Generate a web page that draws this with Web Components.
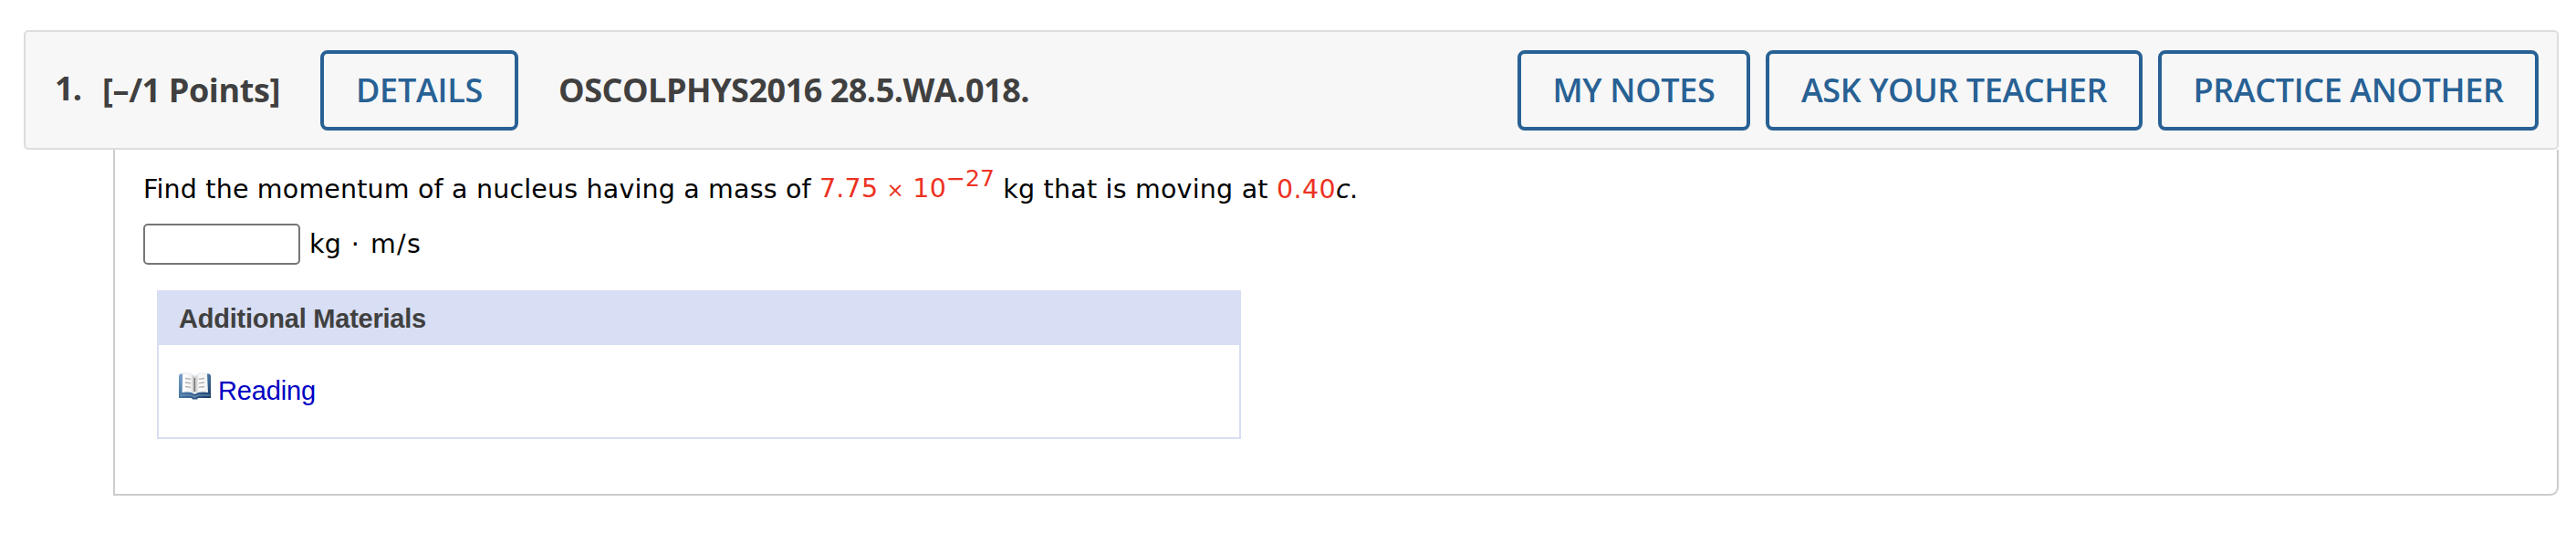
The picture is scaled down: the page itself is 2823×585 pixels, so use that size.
<!DOCTYPE html>
<html lang="en">
<head>
<meta charset="utf-8">
<title>Question 1</title>
<style>
body { margin: 0; background: #fff; font-family: "Open Sans", sans-serif; }
</style>
</head>
<body>
<question-page></question-page>
<script>
const define = (name, html, setup) => {
  const template = document.createElement('template');
  template.innerHTML = html;
  customElements.define(name, class extends HTMLElement {
    constructor() {
      super();
      this.attachShadow({ mode: 'open' }).append(template.content.cloneNode(true));
    }
    connectedCallback() { if (setup) setup(this); }
  });
};

/* A run of text whose tracking is adjusted so that it fills a given width. */
define('text-run', `
<style>
  :host { display: block; flex: none; }
  span { display: block; width: max-content; white-space: pre; }
</style><span><slot></slot></span>`, host => {
  const target = Number(host.getAttribute('width'));
  const span = host.shadowRoot.querySelector('span');
  const count = host.textContent.length;
  const natural = span.getBoundingClientRect().width;
  span.style.letterSpacing = (target - natural) / count + 'px';
  host.style.width = target + 'px';
});

define('outline-button', `
<style>
  :host { display: block; flex: none; }
  button { box-sizing: border-box; width: 100%; height: 88px; margin: 0; padding: 0; display: flex;
    align-items: center; justify-content: center; border: 4px solid #286194; border-radius: 8px;
    background: transparent; color: #286194; font: 600 36px/48px "Open Sans", sans-serif; }
</style><button type="button"><slot></slot></button>`);

define('question-header', `
<style>
  :host { display: flex; align-items: center; box-sizing: border-box; height: 131px; margin-left: 26px; width: 2778px;
    padding: 0 20px 0 32px; border: 2px solid #ddd; border-radius: 5px; background: #f7f7f7;
    color: #404040; font: 700 36px/48px "Open Sans", sans-serif; }
  .number { width: 52px; padding-bottom: 4px; }
  .points { width: 239px; }
  .details { width: 217px; }
  .code { margin-left: 44px; flex: 1; }
  .actions { display: flex; gap: 17px; }
  .notes { width: 255px; } .ask { width: 413px; } .practice { width: 417px; }
</style>
<div class="number"><text-run width="29">1.</text-run></div>
<div class="points"><text-run width="195">[–/1 Points]</text-run></div>
<outline-button class="details"><text-run width="139">DETAILS</text-run></outline-button>
<div class="code"><text-run width="516">OSCOLPHYS2016 28.5.WA.018.</text-run></div>
<div class="actions">
  <outline-button class="notes"><text-run width="178">MY NOTES</text-run></outline-button>
  <outline-button class="ask"><text-run width="335">ASK YOUR TEACHER</text-run></outline-button>
  <outline-button class="practice"><text-run width="340">PRACTICE ANOTHER</text-run></outline-button>
</div>`);

define('book-icon', `
<style>:host { display: block; width: 35px; height: 32px; } svg { display: block; }</style>
<svg width="35" height="32" viewBox="0 0 35 32">
  <defs>
    <linearGradient id="cover" x1="0" y1="0" x2="1" y2="1"><stop offset="0" stop-color="#79a3cb"/><stop offset=".5" stop-color="#43719f"/><stop offset="1" stop-color="#17365f"/></linearGradient>
    <linearGradient id="page" x1="0" x2="1"><stop offset="0" stop-color="#fff"/><stop offset=".7" stop-color="#f4f4f4"/><stop offset="1" stop-color="#bcbcbc"/></linearGradient>
    <linearGradient id="page2" x1="0" x2="1"><stop offset="0" stop-color="#c8c8c8"/><stop offset=".35" stop-color="#fafafa"/><stop offset="1" stop-color="#f4f4f4"/></linearGradient>
  </defs>
  <path d="M0 5Q0 3 2 2.5H13L17.5 5L22 2.5H33Q35 3 35 5V29H21L20 30.5H15L14 29H0Z" fill="url(#cover)"/>
  <path d="M4 1.5Q13 .5 17.5 5Q22 .5 31 1.5L32 23Q22 21.5 17.5 25Q13 21.5 3.5 23Z" fill="#e8edf2"/>
  <path d="M5 2.5Q13 2 17 5.5V23Q13 20.5 4.5 21.5Z" fill="url(#page)"/>
  <path d="M18 5.5Q22 2 30 2.5L31 21.5Q22 20.5 18 23Z" fill="url(#page2)"/>
  <path d="M7 7.5l6 .8M7 12l6 .8M7 16.5l6 .8M22 8.3l6-.8M22 12.8l6-.8M22 17.3l6-.8" stroke="#b1b1b1" stroke-width="1.3"/>
  <path d="M17.3 7V22" stroke="#777" stroke-width="1.5"/>
  <path d="M1 26H14L17.5 28L21 26H34" stroke="#7098bd" stroke-width="1.2" fill="none"/>
</svg>`);

define('additional-materials', `
<style>
  :host { display: block; box-sizing: border-box; width: 1188px; height: 163px; border: 2px solid #d8def3;
    font: 29px/34px "Liberation Sans", Arial, sans-serif; }
  .title { box-sizing: border-box; height: 58px; padding: 12px 0 0 22px; background: #d8def3; color: #404040; font-weight: 700; }
  .item { display: flex; align-items: flex-start; padding: 29px 0 0 22px; }
  a { color: #0000c4; text-decoration: none; margin: 4px 0 0 8px; }
</style>
<div class="title"><text-run width="271">Additional Materials</text-run></div>
<div class="item"><book-icon></book-icon><a><text-run width="107">Reading</text-run></a></div>`);

define('question-body', `
<style>
  :host { display: block; box-sizing: border-box; margin-left: 124px; width: 2680px; height: 379px;
    padding: 27px 0 0 31px; border: 2px solid #ccc; border-top: 0; border-radius: 0 0 9px 0;
    color: #000; font: 28.5px/34px Verdana, "DejaVu Sans", sans-serif; }
  .sentence { display: flex; height: 34px; }
  .red { color: #ed3223; }
  .value { display: flex; margin-top: -1px; }
  .times { font-size: 23px; }
  .power { font-size: 25px; margin-top: -11px; }
  i { font-style: italic; }
  .answer { display: flex; margin-top: 20px; height: 45px; }
  input { box-sizing: border-box; width: 172px; height: 45px; margin: 0 10px 0 0; border: 2px solid #767676; border-radius: 5px; background: #fff; }
  .unit { display: flex; margin-top: 6px; }
  additional-materials { margin: 28px 0 0 15px; }
</style>
<div class="sentence">
  <text-run width="741">Find the momentum of a nucleus having a mass of </text-run>
  <div class="red value"><text-run width="139">7.75 <span class="times">×</span> 10</text-run><text-run class="power" width="53">−27</text-run></div>
  <text-run width="309"> kg that is moving at </text-run>
  <text-run class="red" width="65">0.40</text-run>
  <i><text-run width="15">c</text-run></i>
  <text-run width="9">.</text-run>
</div>
<div class="answer"><input type="text" aria-label="Momentum"><div class="unit"><text-run width="35">kg</text-run><text-run width="32"> · </text-run><text-run width="56">m/s</text-run></div></div>
<additional-materials></additional-materials>`);

define('question-page', `
<style>:host { display: block; box-sizing: border-box; height: 585px; padding-top: 33px; overflow: hidden; }</style>
<question-header></question-header>
<question-body></question-body>`);
</script>
</body>
</html>
